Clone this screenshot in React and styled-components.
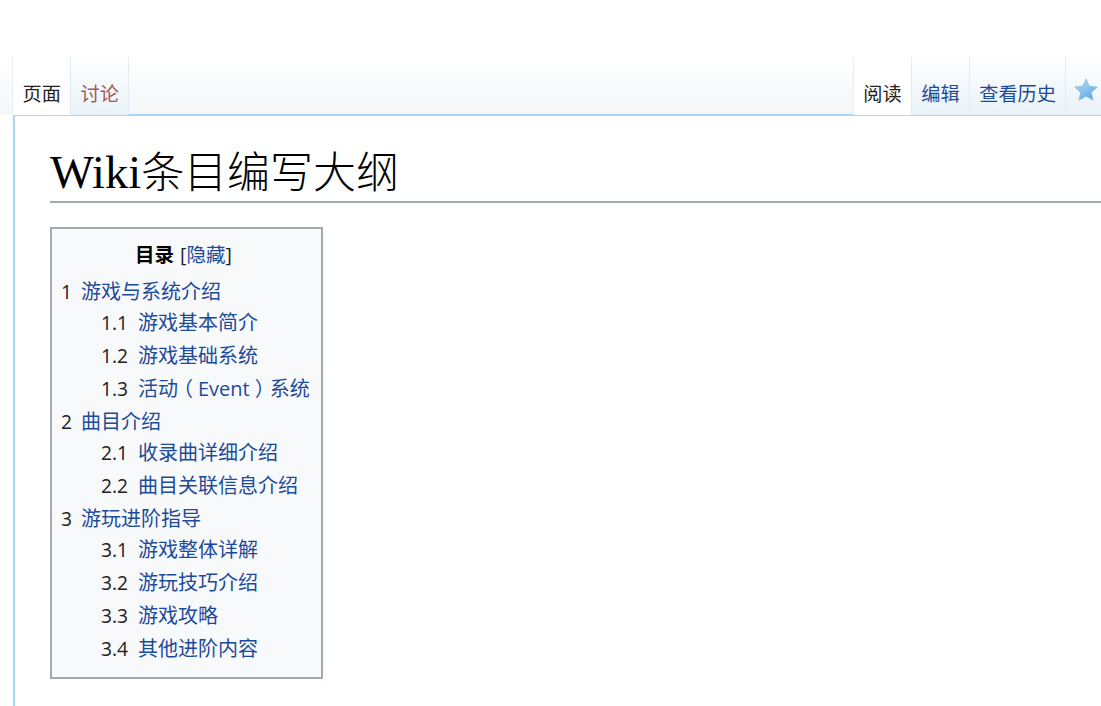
import styled, { createGlobalStyle } from "styled-components";

const Paren = styled.span`
  font-feature-settings: "halt";
  padding: 0 5px;
`;

const toc = [
  {
    num: "1",
    title: "游戏与系统介绍",
    items: [
      { num: "1.1", title: "游戏基本简介" },
      { num: "1.2", title: "游戏基础系统" },
      {
        num: "1.3",
        title: (
          <>
            活动<Paren>（</Paren>Event<Paren>）</Paren>系统
          </>
        ),
      },
    ],
  },
  {
    num: "2",
    title: "曲目介绍",
    items: [
      { num: "2.1", title: "收录曲详细介绍" },
      { num: "2.2", title: "曲目关联信息介绍" },
    ],
  },
  {
    num: "3",
    title: "游玩进阶指导",
    items: [
      { num: "3.1", title: "游戏整体详解" },
      { num: "3.2", title: "游玩技巧介绍" },
      { num: "3.3", title: "游戏攻略" },
      { num: "3.4", title: "其他进阶内容" },
    ],
  },
];

const App = () => {
  return (
    <>
      <GlobalStyle />
      <Page>
        <Head>
          <TabGroup>
            <Tab $active>页面</Tab>
            <Tab $color="#a55858">讨论</Tab>
          </TabGroup>
          <TabGroup>
            <Tab $active>阅读</Tab>
            <Tab>编辑</Tab>
            <Tab>查看历史</Tab>
            <StarTab>
              <svg width="24" height="24" viewBox="0 0 24 24">
                <defs>
                  <linearGradient id="star" x1="0.3" y1="0" x2="0.7" y2="1">
                    <stop offset="0" stopColor="#b4dcf8" />
                    <stop offset="1" stopColor="#58a8e6" />
                  </linearGradient>
                </defs>
                <path
                  d="M12 1l3.300 7.300 7.900.8-5.900 5.300 1.700 7.800-7-4-7 4 1.700-7.800L.8 9.100l7.900-.8z"
                  fill="url(#star)"
                  stroke="#93bcd8"
                  strokeWidth="0.9"
                  strokeLinejoin="round"
                />
              </svg>
            </StarTab>
          </TabGroup>
        </Head>
        <Content>
          <Heading>
            <Latin>Wiki</Latin>条目编写大纲
          </Heading>
          <TocBox>
            <TocTitle>
              <strong>目录</strong>
              <Toggle>
                [<a>隐藏</a>]
              </Toggle>
            </TocTitle>
            {toc.map((section) => (
              <Section key={section.num}>
                <TopRow>
                  <Num>{section.num}</Num>
                  <Link>{section.title}</Link>
                </TopRow>
                <SubList>
                  {section.items.map((item) => (
                    <Row key={item.num}>
                      <Num>{item.num}</Num>
                      <Link>{item.title}</Link>
                    </Row>
                  ))}
                </SubList>
              </Section>
            ))}
          </TocBox>
        </Content>
      </Page>
    </>
  );
};

const GlobalStyle = createGlobalStyle`
  html, body {
    margin: 0;
    padding: 0;
    background: #fff;
    overflow: hidden;
  }
  body {
    font-family: "Open Sans", "Noto Sans CJK SC", sans-serif;
    color: #202122;
  }
`;

const Page = styled.div`
  height: 706px;
  overflow: hidden;
`;

const Head = styled.div`
  display: flex;
  justify-content: space-between;
  box-sizing: border-box;
  height: 114px;
  padding: 57px 0 0 12px;
  background: linear-gradient(#fff 50%, #f4f6f8 100%);
`;

const TabGroup = styled.div`
  display: flex;
`;

const Tab = styled.div`
  box-sizing: border-box;
  height: 58px;
  padding: 23px 9px 0 9.6px;
  font-size: 19.2px;
  line-height: 27px;
  white-space: nowrap;
  color: ${(p) => p.$color || (p.$active ? "#222" : "#1c4b9c")};
  background: ${(p) => (p.$active ? "#fff" : "linear-gradient(#fff, #e8f2f8)")};
  border-right: 1px solid #dfebf5;
  &:first-child {
    border-left: 1px solid #e6eef5;
  }
`;

const StarTab = styled(Tab)`
  width: 35px;
  padding: 21px 0 0 8px;
  border-right: 0;
`;

const Content = styled.div`
  box-sizing: border-box;
  margin: 0 0 0 13px;
  height: 592px;
  padding: 24px 0 0 37px;
  border-top: 2px solid #a7d7f9;
  border-left: 2px solid #a7d7f9;
  background: #fff;
`;

const Heading = styled.h1`
  margin: 0 0 24px -2px;
  height: 61px;
  font-family: "Noto Sans CJK SC", "Liberation Serif", serif;
  font-size: 43px;
  font-weight: 300;
  line-height: 59px;
  white-space: nowrap;
  color: #000;
  border-bottom: 2px solid #a2a9b1;
`;

const Latin = styled.span`
  font-family: "Liberation Serif", serif;
  font-size: 46.5px;
`;

const TocBox = styled.div`
  box-sizing: border-box;
  width: 273px;
  height: 452px;
  margin-left: -2px;
  padding: 10px 9px;
  background: #f8f9fa;
  border: 2px solid #a2a9b1;
`;

const TocTitle = styled.div`
  height: 36px;
  padding-right: 6px;
  font-size: 19.5px;
  line-height: 31px;
  text-align: center;
  strong {
    font-weight: 700;
    color: #000;
  }
`;

const Toggle = styled.span`
  margin-left: 6px;
  color: #202122;
  a {
    color: #1c4b9c;
  }
`;

const Section = styled.div`
  display: flex;
  flex-direction: column;
`;

const SubList = styled.div`
  display: flex;
  flex-direction: column;
  margin-top: -2px;
  padding-left: 40px;
`;

const Row = styled.div`
  display: flex;
  gap: 10px;
  font-size: 20px;
  line-height: 33px;
  white-space: nowrap;
`;

const TopRow = styled(Row)`
  gap: 9px;
`;

const Num = styled.span`
  font-size: 19.2px;
  color: #202122;
`;

const Link = styled.a`
  color: #1c4b9c;
`;

export default App;
